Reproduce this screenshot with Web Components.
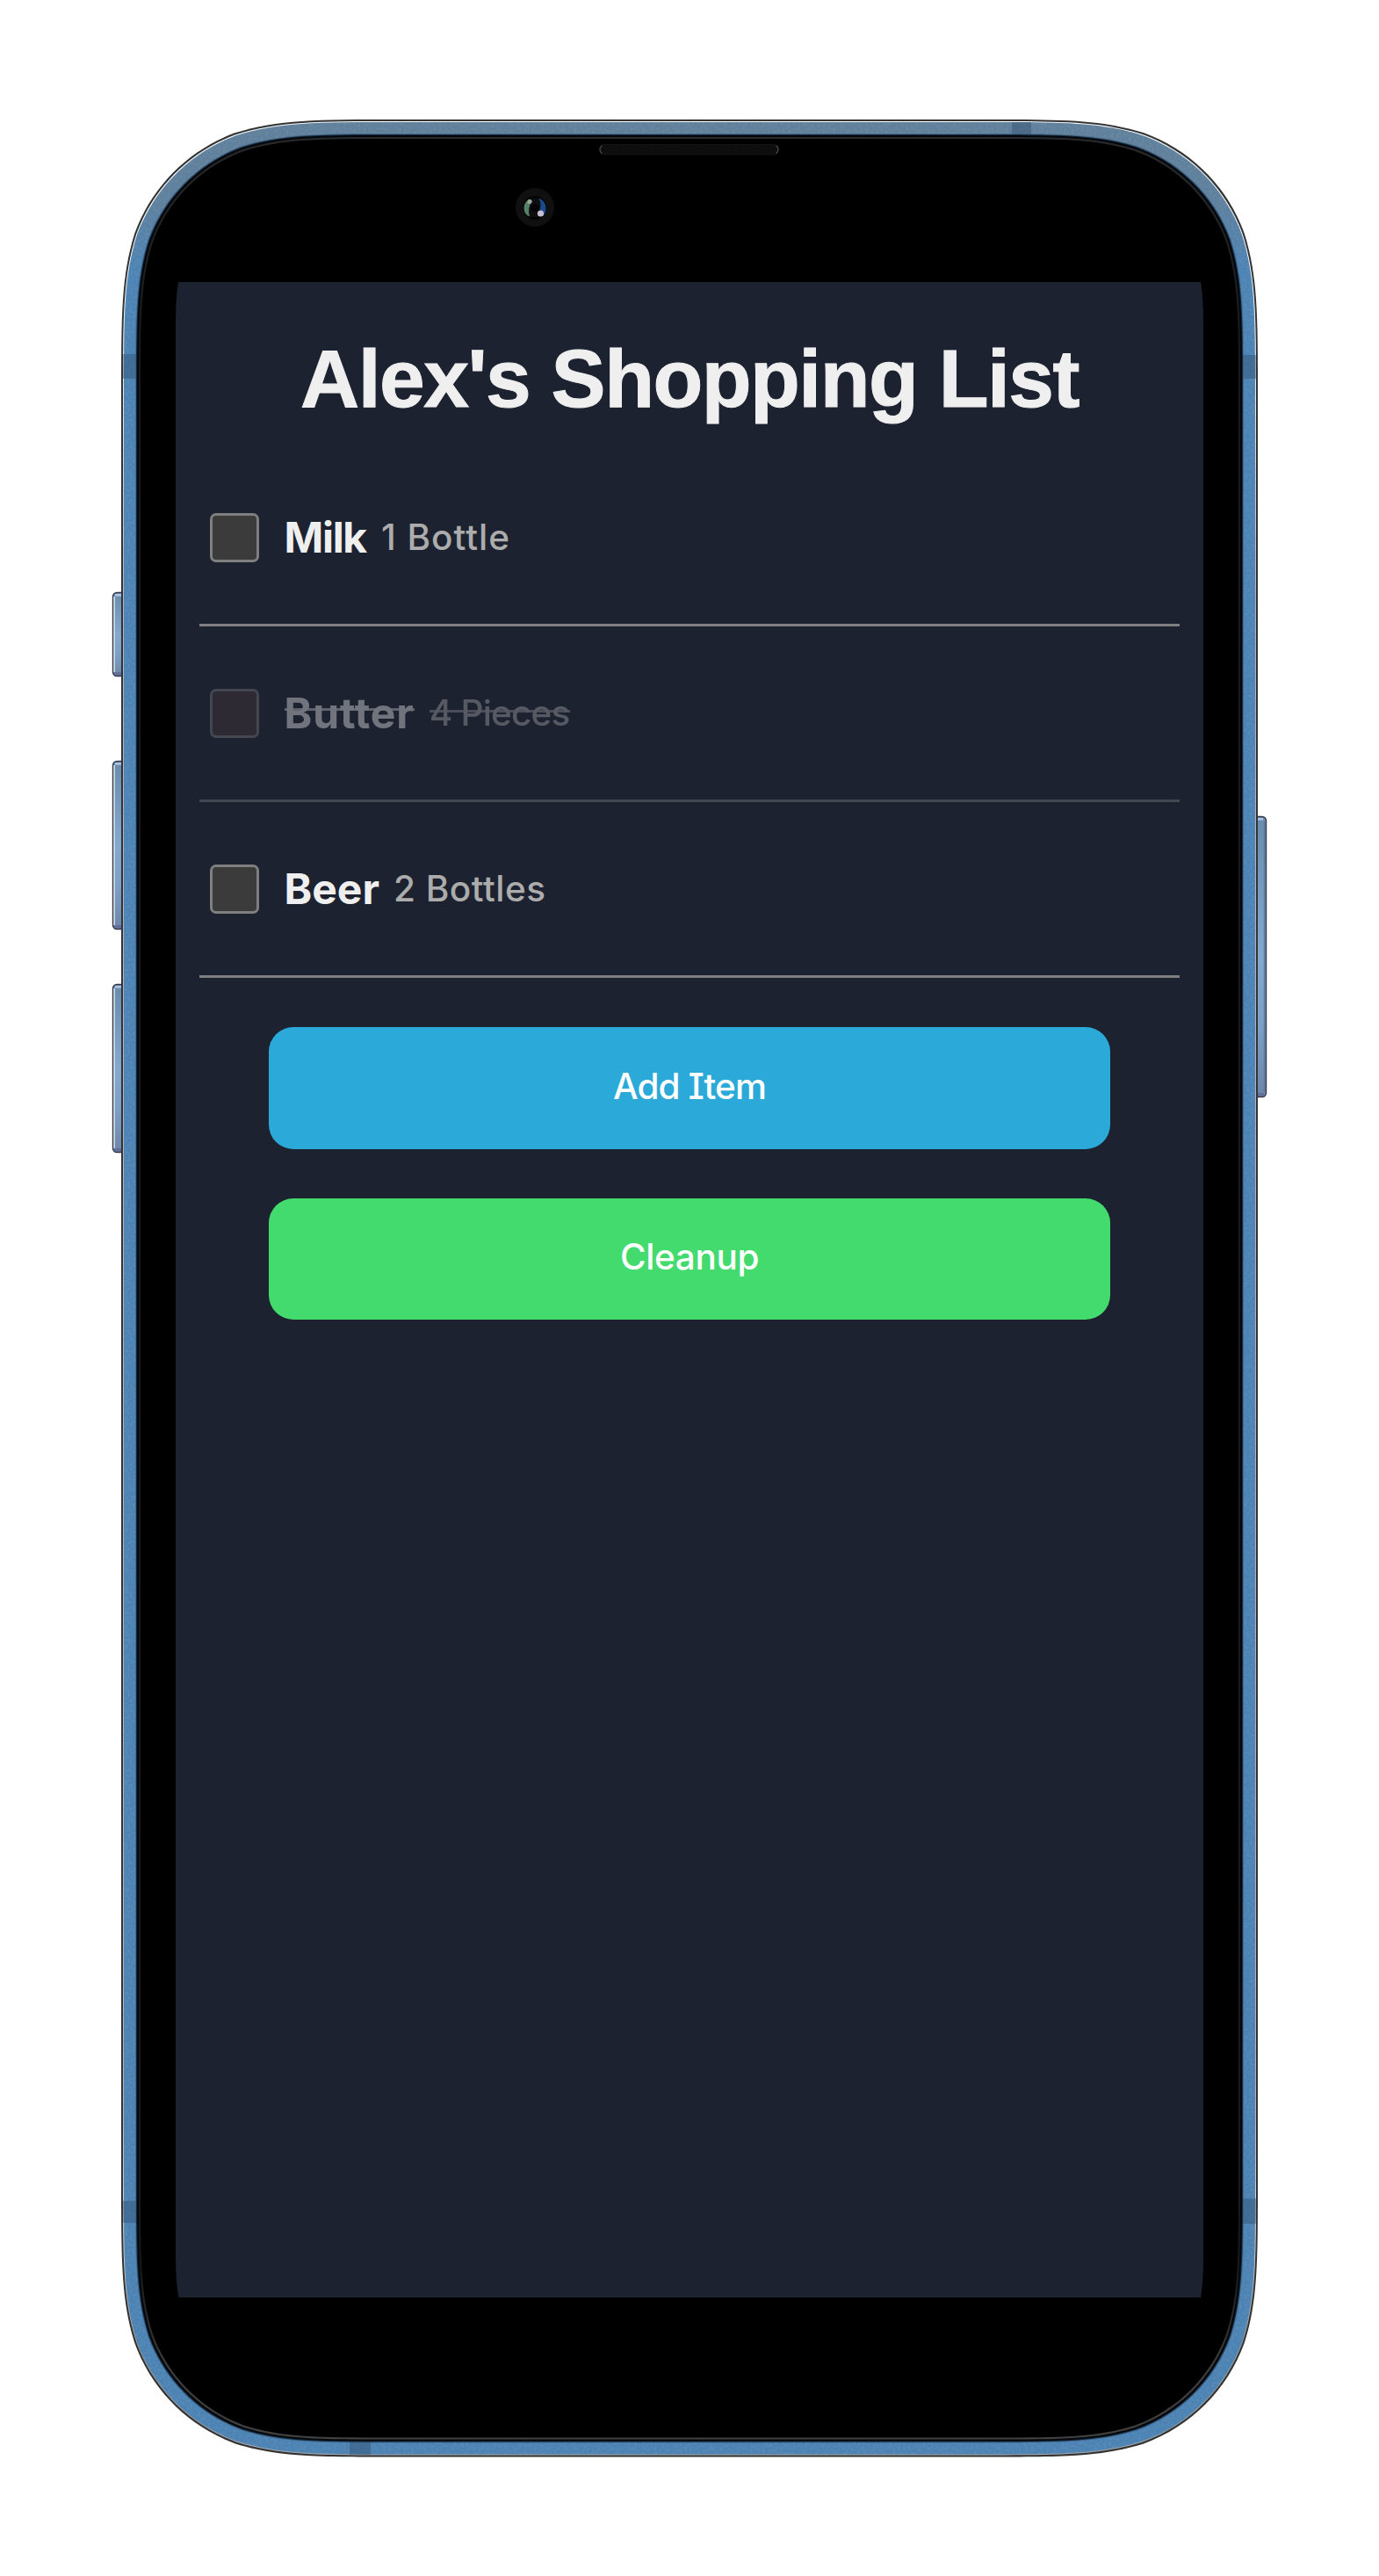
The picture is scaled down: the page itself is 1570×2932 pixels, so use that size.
<!DOCTYPE html>
<html lang="en">
<head>
<meta charset="utf-8">
<title>Alex's Shopping List</title>
<style>
  html, body { margin: 0; background: #fff; }
  body { font-family: Inter, "Noto Sans", sans-serif; }
</style>
</head>
<body>
<phone-shell>
  <shopping-list heading="Alex's Shopping List">
    <list-item quantity="1 Bottle" style="--name-ls:-1.3px;--qty-ls:1px;--gap:17px">Milk</list-item>
    <list-item quantity="4 Pieces" done style="--name-ls:.9px;--qty-ls:-.8px;--gap:17px">Butter</list-item>
    <list-item quantity="2 Bottles" style="--name-ls:0px;--qty-ls:.5px;--gap:16px">Beer</list-item>
    <action-button slot="actions" style="--fill:#2ba9d9;--ls:-.9px">Add Item</action-button>
    <action-button slot="actions" style="--fill:#44db6e;--ls:-.4px">Cleanup</action-button>
  </shopping-list>
</phone-shell>

<script>
// Continuous-curvature rounded rectangle, as used for phone outlines.
function squircle(x, y, w, h, r) {
  const a = 1.528665 * r, b = 1.08849 * r, c = 0.868407 * r, d = 0.631494 * r,
        e = 0.0749114 * r, f = 0.372824 * r, g = 0.16906 * r;
  const X = x + w, Y = y + h;
  return `M${x + a} ${y}H${X - a}
    C${X - b} ${y} ${X - c} ${y} ${X - d} ${y + e}C${X - f} ${y + g} ${X - g} ${y + f} ${X - e} ${y + d}C${X} ${y + c} ${X} ${y + b} ${X} ${y + a}
    V${Y - a}C${X} ${Y - b} ${X} ${Y - c} ${X - e} ${Y - d}C${X - g} ${Y - f} ${X - f} ${Y - g} ${X - d} ${Y - e}C${X - c} ${Y} ${X - b} ${Y} ${X - a} ${Y}
    H${x + a}C${x + b} ${Y} ${x + c} ${Y} ${x + d} ${Y - e}C${x + f} ${Y - g} ${x + g} ${Y - f} ${x + e} ${Y - d}C${x} ${Y - c} ${x} ${Y - b} ${x} ${Y - a}
    V${y + a}C${x} ${y + b} ${x} ${y + c} ${x + e} ${y + d}C${x + g} ${y + f} ${x + f} ${y + g} ${x + d} ${y + e}C${x + c} ${y} ${x + b} ${y} ${x + a} ${y}Z`;
}
const ring = i => squircle(138 + i, 136 + i, 1294 - 2 * i, 2660.5 - 2 * i, 205 - i * 0.85);
const key = (x, y, h, right) => `
  <rect x="${x + .5}" y="${y + .5}" width="16" height="${h - 1}" rx="4.5" fill="url(#key)" stroke="#34364a" stroke-width="1.4"/>
  <rect x="${x + 3}" y="${y + 2}" width="10" height="2.6" fill="#b3c3e4"/>
  <rect x="${x + 2}" y="${y + h - 5}" width="12" height="3.4" fill="#5d6a97" opacity=".8"/>
  ${right ? `<path d="M${x + 14.6} ${y + 6}v${h - 12}" stroke="#5f7798" stroke-width="1.6"/>`
          : `<path d="M${x + 2.1} ${y + 5}v${h - 10}" stroke="#d3d8dc" stroke-width="1.7"/>`}`;

customElements.define('phone-shell', class extends HTMLElement {
  constructor() {
    super();
    this.attachShadow({ mode: 'open' }).innerHTML = `
    <style>
      :host { display: block; position: relative; box-sizing: border-box; width: 1570px; height: 2932px; padding: 321px 200px 317px; }
      svg { position: absolute; inset: 0; }
      main { position: relative; height: 100%; background: #1d2230;
        clip-path: path("M3 0H1167Q1170 18 1170 46V2248Q1170 2276 1167 2294H3.500Q0 2276 0 2248V46Q0 18 3 0Z"); }
    </style>
    <svg width="1570" height="2932" viewBox="0 0 1570 2932" aria-hidden="true">
      <defs>
        <linearGradient id="body" gradientUnits="userSpaceOnUse" x1="0" y1="136" x2="0" y2="2797">
          <stop offset="0" stop-color="#607f99"/><stop offset=".035" stop-color="#5f7f9c"/>
          <stop offset=".065" stop-color="#4b83b5"/><stop offset="1" stop-color="#4b82b3"/>
        </linearGradient>
        <linearGradient id="shine" gradientUnits="userSpaceOnUse" x1="0" y1="136" x2="0" y2="2797">
          <stop offset="0" stop-color="#fff"/><stop offset=".1" stop-color="#fff"/><stop offset=".2" stop-color="#b8b5cb"/>
          <stop offset=".85" stop-color="#b8b5cb"/><stop offset=".9" stop-color="#ddd"/><stop offset=".95" stop-color="#999"/><stop offset="1" stop-color="#aaa"/>
        </linearGradient>
        <linearGradient id="lip" gradientUnits="userSpaceOnUse" x1="0" y1="136" x2="0" y2="2797">
          <stop offset="0" stop-color="#292b2c"/><stop offset=".1" stop-color="#17191b"/><stop offset=".92" stop-color="#17191b"/><stop offset=".96" stop-color="#3c3c3c"/><stop offset="1" stop-color="#424242"/>
        </linearGradient>
        <linearGradient id="key" x1="0" y1="0" x2="0" y2="1">
          <stop offset="0" stop-color="#688cad"/><stop offset=".5" stop-color="#82a9cf"/><stop offset=".75" stop-color="#7c9fc5"/><stop offset="1" stop-color="#6c86a8"/>
        </linearGradient>
        <filter id="grain" x="0" y="0" width="100%" height="100%">
          <feTurbulence type="fractalNoise" baseFrequency=".35" numOctaves="3" seed="4"/>
          <feColorMatrix values="0 0 0 0 .22  0 0 0 0 .38  0 0 0 0 .55  1.4 0 0 0 -.5"/>
        </filter>
        <clipPath id="outline"><path d="${ring(2)}"/></clipPath>
        <pattern id="mesh" width="4" height="4" patternUnits="userSpaceOnUse"><rect width="4" height="4" fill="#111"/><path d="M0 0h2v2H0zM2 2h2v2H2z" fill="#0a0a0a"/></pattern>
      </defs>
      ${key(128, 674, 96)}${key(128, 866, 192)}${key(128, 1120, 192)}${key(1425, 929, 320, true)}
      <path d="${ring(0)}" fill="#333"/>
      <path d="${ring(2)}" fill="url(#shine)"/>
      <path d="${ring(3)}" fill="url(#body)"/>
      <g clip-path="url(#outline)">
        <rect x="138" y="139" width="1294" height="2655" filter="url(#grain)" opacity=".45"/>
        <g fill="#30506f" fill-opacity=".45">
          <path d="M140 403h20v28h-20zM140 2505h20v25h-20zM1411 404h19v27h-19zM1411 2502.500h19v28.500h-19zM1152 139h22v20h-22zM398 2775h24v19h-24z"/>
        </g>
      </g>
      <path d="${ring(16)}" fill="#2f5577" opacity=".5"/>
      <path d="${ring(17)}" fill="#16283a"/>
      <path d="${ring(18)}" fill="#04080c"/>
      <path d="${ring(20)}" fill="url(#lip)"/>
      <path d="${ring(22)}" fill="#000"/>
      <rect x="682.500" y="164.500" width="204" height="11.500" rx="5.750" fill="url(#mesh)" stroke="#141414"/>
      <path d="M685.500 165.500q-5 4.700 0 9.500M883.500 165.500q5 4.700 0 9.500" fill="none" stroke="#444" stroke-width="1.200"/>
      <circle cx="609" cy="236" r="22" fill="#101010"/>
      <circle cx="609" cy="236.500" r="13.500" fill="#040404"/>
      <circle cx="609" cy="236.500" r="11" fill="#100e10"/>
      <path d="M603 226.500q-7 4-6.500 11t6.500 9q-3-10 3-18z" fill="#568068"/>
      <path d="M613.500 225.500q7.500 3 8 11t-5 10l-3-5q4-8 0-16z" fill="#174b8b"/>
      <circle cx="609" cy="236.500" r="4.500" fill="#050505"/>
      <circle cx="603" cy="229.500" r="2.500" fill="#9aa79e"/>
      <circle cx="615.500" cy="243" r="3.600" fill="#c9bfd4"/>
    </svg>
    <main><slot></slot></main>`;
  }
});

customElements.define('shopping-list', class extends HTMLElement {
  constructor() {
    super();
    this.attachShadow({ mode: 'open' }).innerHTML = `
    <style>
      :host { display: flex; flex-direction: column; padding: 55px 27px 0; }
      h1 { margin: 0 0 27px; text-align: center; font: bold 93px/110px "Liberation Sans", Arial, sans-serif; color: #efefef; letter-spacing: -1.500px; -webkit-text-stroke: 1px #efefef; }
      .items { display: flex; flex-direction: column; }
      nav { display: flex; flex-direction: column; gap: 56px; padding: 56px 79px 0; }
    </style>
    <h1></h1>
    <div class="items"><slot></slot></div>
    <nav><slot name="actions"></slot></nav>`;
  }
  connectedCallback() { this.shadowRoot.querySelector('h1').textContent = this.getAttribute('heading'); }
});

customElements.define('list-item', class extends HTMLElement {
  constructor() {
    super();
    this.attachShadow({ mode: 'open' }).innerHTML = `
    <style>
      :host { display: flex; align-items: center; box-sizing: border-box; height: 200px; padding-left: 11.500px;
        border-bottom: 3px solid #7f7f80; color: #efefef; white-space: nowrap; }
      :host([done]) { opacity: .4; }
      i { box-sizing: border-box; width: 56px; height: 56px; border: 3px solid #7f7f7f; border-radius: 7px; background: #3b3b3b; margin-right: 29px; }
      :host([done]) i { background: #453838; }
      span { position: relative; line-height: 60px; }
      .name { font-size: 48px; font-weight: 700; letter-spacing: var(--name-ls); margin-right: var(--gap); }
      .qty { font-size: 40.500px; font-weight: 450; letter-spacing: var(--qty-ls); color: #acacac; }
      :host([done]) span::after { content: ""; position: absolute; left: 0; right: 0; top: 24.500px; height: 2.500px; background: currentColor; opacity: .8; }
      :host([done]) .qty::after { top: 26.500px; }
    </style>
    <i></i><span class="name"><slot></slot></span><span class="qty"></span>`;
  }
  connectedCallback() { this.shadowRoot.querySelector('.qty').textContent = this.getAttribute('quantity'); }
});

customElements.define('action-button', class extends HTMLElement {
  constructor() {
    super();
    this.attachShadow({ mode: 'open' }).innerHTML = `
    <style>
      :host { display: block; }
      button { display: block; width: 100%; height: 138.500px; padding: 0 0 3px; border: 0; border-radius: 28px; background: var(--fill);
        font: 450 40.500px/60px Inter, "Noto Sans", sans-serif; font-feature-settings: "cv08"; letter-spacing: var(--ls); color: #fff; }
    </style>
    <button><slot></slot></button>`;
  }
});
</script>
</body>
</html>
